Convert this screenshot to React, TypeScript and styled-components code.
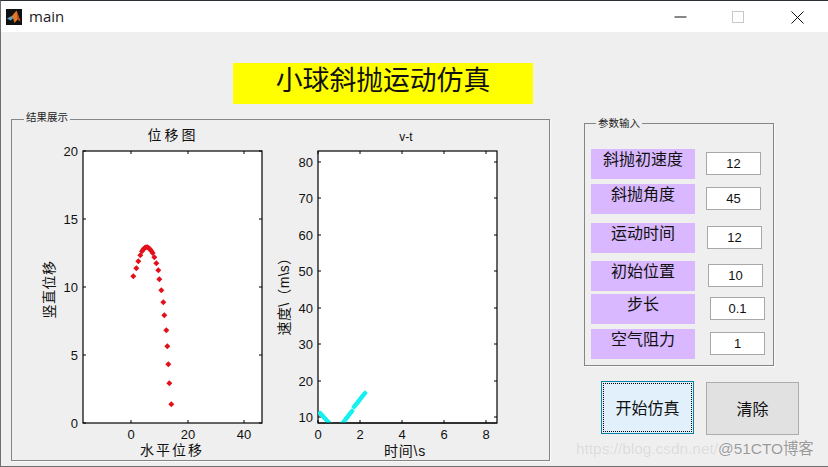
import React from "react";
import styled, { createGlobalStyle } from "styled-components";

const Global = createGlobalStyle`
  html, body { margin: 0; padding: 0; background: #efefef; }
  * { box-sizing: border-box; }
`;

const CJK = `"Noto Sans CJK SC", sans-serif`;
const LATIN = `"Liberation Sans", "Noto Sans CJK SC", sans-serif`;

const Shell = styled.div`
  position: relative;
  width: 828px;
  height: 467px;
  overflow: hidden;
  background: #efefef;
  border-top: 1px solid #2b2f36;
  border-left: 1px solid #6f6f6f;
  border-bottom: 1px solid #6f6f6f;
  font-family: ${CJK};
  color: #000;
`;

const TitleBar = styled.header`
  height: 31px;
  background: #fff;
  display: flex;
  align-items: center;
  padding-left: 5px;
`;

const AppIcon = styled.svg`
  width: 16px;
  height: 16px;
  display: block;
`;

const WindowName = styled.span`
  margin-left: 7px;
  font: 400 15px "Open Sans", sans-serif;
  color: #1a1a1a;
  margin-top: -1px;
`;

const WindowControls = styled.div`
  margin-left: auto;
  display: flex;
  height: 100%;
`;

const ControlGlyph = styled.svg<{ $gap: number }>`
  width: 13px;
  height: 13px;
  display: block;
  margin-right: ${(p) => p.$gap}px;
  align-self: center;
  margin-top: 1px;
`;

const Banner = styled.h1`
  margin: 31px 0 0 232px;
  width: 300px;
  height: 41px;
  background: #ffff00;
  font-family: ${CJK};
  font-weight: 400;
  font-size: 26.8px;
  line-height: 32px;
  text-align: center;
  color: #111;
`;

const Content = styled.main`
  display: flex;
  align-items: flex-start;
  margin-top: 15px;
  margin-left: 10px;
`;

const Panel = styled.section`
  border: 1px solid #858585;
  box-shadow: 1px 1px 0 #fafafa;
`;

const ResultsPanel = styled(Panel)`
  width: 539px;
  height: 342px;
`;

const PanelLegend = styled.div<{ $left: number; $top: number }>`
  width: fit-content;
  height: 12px;
  margin-left: ${(p) => p.$left}px;
  margin-top: ${(p) => p.$top}px;
  padding: 0 2px;
  background: #efefef;
  font-size: 10.5px;
  line-height: 12px;
  color: #222;
`;

const Charts = styled.div`
  display: flex;
  margin-top: 2px;
  padding-left: 28px;
`;

const ChartSvg = styled.svg`
  display: block;
  flex: none;
`;

const TickText = styled.text`
  font-family: ${LATIN};
  font-size: 13px;
  fill: #111;
`;

const AxisText = styled.text<{ $size: number; $spacing: number }>`
  font-family: ${LATIN};
  font-size: ${(p) => p.$size}px;
  letter-spacing: ${(p) => p.$spacing}px;
  fill: #111;
`;

const SidePanel = styled.aside`
  margin-left: 34px;
  margin-top: 4px;
`;

const ParamPanel = styled(Panel)`
  width: 190px;
  height: 243px;
`;

const ParamList = styled.div`
  padding-left: 6px;
`;

const ParamRow = styled.div<{ $gap: number }>`
  display: flex;
  align-items: flex-start;
  margin-top: ${(p) => p.$gap}px;
`;

const ParamLabel = styled.div`
  width: 104px;
  height: 30px;
  background: #d9b8ff;
  text-align: center;
  font-size: 16px;
  line-height: 19px;
  color: #111;
`;

const ParamValue = styled.div<{ $gap: number }>`
  width: 55px;
  height: 23px;
  margin-top: 3px;
  margin-left: ${(p) => p.$gap}px;
  background: #fff;
  border: 1px solid #a8a8a8;
  text-align: center;
  font-family: ${LATIN};
  font-size: 13px;
  line-height: 21px;
  color: #111;
`;

const ButtonRow = styled.div`
  display: flex;
  align-items: flex-start;
  margin-top: 15px;
  margin-left: 17px;
  gap: 12px;
`;

const ActionButton = styled.button<{ $primary?: boolean }>`
  width: 93px;
  height: 53px;
  margin-top: ${(p) => (p.$primary ? 0 : 1)}px;
  padding: 0 0 2px;
  background: ${(p) => (p.$primary ? "#e1f0fb" : "#e1e1e1")};
  border: 1px solid ${(p) => (p.$primary ? "#0a7fa8" : "#adadad")};
  outline: ${(p) => (p.$primary ? "1px dotted #000" : "none")};
  outline-offset: -3px;
  font-family: ${CJK};
  font-size: 16px;
  color: #111;
`;

const Watermark = styled.div`
  position: absolute;
  left: 575px;
  top: 437px;
  font: 400 15.4px/22px "Liberation Sans", "Noto Sans CJK SC", sans-serif;
  white-space: nowrap;
  pointer-events: none;
`;

const WatermarkLink = styled.span`
  color: rgba(190, 190, 190, 0.55);
  text-shadow: 0 0 1px #fff;
`;

const WatermarkBrand = styled.span`
  color: rgba(120, 120, 120, 0.75);
  text-shadow: 0 0 1px #fff;
`;

const redPoints: [number, number][] = [
  [340, 139], [349, 115], [355, 94], [361, 76], [366, 64], [370, 58], [374, 54], [378, 52], [382, 52],
  [386, 54], [390, 58], [394, 63], [398, 69], [403, 82], [409, 100], [415, 121], [418, 148], [424, 181],
  [430, 217], [433, 256], [439, 301], [442, 349], [445, 403], [448, 460], [454, 523],
].map(([x, y]) => [20 + x / 3, 230 + y / 3] as [number, number]);

function segment(x0: number, y0: number, x1: number, y1: number, n: number): [number, number][] {
  return Array.from({ length: n + 1 }, (_, i) => [x0 + ((x1 - x0) * i) / n, y0 + ((y1 - y0) * i) / n]);
}

const cyanPoints = [
  ...segment(320, 413, 330, 424, 10),
  ...segment(342, 424, 352, 411, 11),
  ...segment(354, 407, 365, 393, 11),
];

function diamond(x: number, y: number, r: number) {
  return `M${x} ${y - r}L${x + r} ${y}L${x} ${y + r}L${x - r} ${y}Z`;
}

type Tick = { at: number; label: string };

const leftX: Tick[] = [{ at: 131, label: "0" }, { at: 188, label: "20" }, { at: 244, label: "40" }];
const leftY: Tick[] = [
  { at: 423, label: "0" }, { at: 355, label: "5" }, { at: 287, label: "10" },
  { at: 219, label: "15" }, { at: 151, label: "20" },
];
const rightX: Tick[] = [
  { at: 318, label: "0" }, { at: 360, label: "2" }, { at: 402, label: "4" },
  { at: 444, label: "6" }, { at: 486, label: "8" },
];
const rightY: Tick[] = [
  { at: 417, label: "10" }, { at: 381, label: "20" }, { at: 344, label: "30" }, { at: 308, label: "40" },
  { at: 271, label: "50" }, { at: 235, label: "60" }, { at: 198, label: "70" }, { at: 162, label: "80" },
];

function Axes({ x, w, xTicks, yTicks }: { x: number; w: number; xTicks: Tick[]; yTicks: Tick[] }) {
  const top = 151;
  const bottom = 423;
  return (
    <>
      <rect x={x} y={top} width={w} height={bottom - top} fill="#fff" stroke="#000" strokeWidth="1.2" />
      {xTicks.map((t) => (
        <g key={t.label}>
          <path d={`M${t.at} ${top}v3M${t.at} ${bottom}v-3`} stroke="#000" strokeWidth="1" />
          <TickText x={t.at} y={439} textAnchor="middle">{t.label}</TickText>
        </g>
      ))}
      {yTicks.map((t) => (
        <g key={t.label}>
          <path d={`M${x} ${t.at}h3M${x + w} ${t.at}h-3`} stroke="#000" strokeWidth="1" />
          <TickText x={x - 5} y={t.at + 4.5} textAnchor="end">{t.label}</TickText>
        </g>
      ))}
    </>
  );
}

const params = [
  { label: "斜抛初速度", value: "12", rowGap: 20, valueGap: 11 },
  { label: "斜抛角度", value: "45", rowGap: 5, valueGap: 11 },
  { label: "运动时间", value: "12", rowGap: 9, valueGap: 12 },
  { label: "初始位置", value: "10", rowGap: 8, valueGap: 13 },
  { label: "步长", value: "0.1", rowGap: 3, valueGap: 15 },
  { label: "空气阻力", value: "1", rowGap: 5, valueGap: 15 },
];

export default function App() {
  return (
    <Shell>
      <Global />
      <TitleBar>
        <AppIcon viewBox="0 0 16 16">
          <rect width="16" height="16" fill="#111" />
          <path d="M1 9.5 5.5 7 7.5 9 4.5 11.5z" fill="#5f9fc0" />
          <path d="M5.5 7.5 10.5 1.5 14.5 12.5 11.5 10.5 8.5 14 7 9z" fill="#e07a28" />
          <path d="M10.5 1.5 14.5 12.5 11.5 10.5z" fill="#b8451c" />
        </AppIcon>
        <WindowName>main</WindowName>
        <WindowControls>
          <ControlGlyph $gap={45} viewBox="0 0 13 13">
            <path d="M0.5 6h12" stroke="#111" strokeWidth="1" />
          </ControlGlyph>
          <ControlGlyph $gap={46} viewBox="0 0 13 13">
            <rect x="0.5" y="0.5" width="11" height="11" fill="none" stroke="#c8c8c8" strokeWidth="1" />
          </ControlGlyph>
          <ControlGlyph $gap={24} viewBox="0 0 13 13">
            <path d="M0.5 0.5 12.5 12.5M12.5 0.5 0.5 12.5" stroke="#111" strokeWidth="1" />
          </ControlGlyph>
        </WindowControls>
      </TitleBar>

      <Banner>小球斜抛运动仿真</Banner>

      <Content>
        <ResultsPanel>
          <PanelLegend $left={12} $top={-9}>结果展示</PanelLegend>
          <Charts>
            <ChartSvg width={230} height={334} viewBox="40 125 230 334">
              <AxisText $size={14} $spacing={3} x={173} y={140} textAnchor="middle">位移图</AxisText>
              <Axes x={83} w={179} xTicks={leftX} yTicks={leftY} />
              {redPoints.map(([x, y], i) => (
                <path key={i} d={diamond(x, y, 3)} fill="#e3101c" />
              ))}
              <AxisText $size={14} $spacing={2} x={172} y={455} textAnchor="middle">水平位移</AxisText>
              <AxisText $size={14} $spacing={0.5} transform="translate(54 289.5) rotate(-90)" textAnchor="middle">竖直位移</AxisText>
            </ChartSvg>
            <ChartSvg width={240} height={334} viewBox="270 125 240 334">
              <defs>
                <clipPath id="vtClip">
                  <rect x={318} y={151} width={179} height={272} />
                </clipPath>
              </defs>
              <AxisText $size={12} $spacing={0} x={406} y={141} textAnchor="middle">v-t</AxisText>
              <Axes x={318} w={179} xTicks={rightX} yTicks={rightY} />
              <g clipPath="url(#vtClip)">
                {cyanPoints.map(([x, y], i) => (
                  <path key={i} d={diamond(x, y, 2.8)} fill="#16f0f0" />
                ))}
              </g>
              <path d="M318 423H497" stroke="#000" strokeWidth="1.2" />
              <AxisText $size={14} $spacing={0.8} x={405} y={456} textAnchor="middle">时间\s</AxisText>
              <AxisText $size={14} $spacing={0.3} transform="translate(289 293) rotate(-90)" textAnchor="middle">速度\（m\s）</AxisText>
            </ChartSvg>
          </Charts>
        </ResultsPanel>

        <SidePanel>
          <ParamPanel>
            <PanelLegend $left={11} $top={-7}>参数输入</PanelLegend>
            <ParamList>
              {params.map((p) => (
                <ParamRow key={p.label} $gap={p.rowGap}>
                  <ParamLabel>{p.label}</ParamLabel>
                  <ParamValue $gap={p.valueGap}>{p.value}</ParamValue>
                </ParamRow>
              ))}
            </ParamList>
          </ParamPanel>
          <ButtonRow>
            <ActionButton $primary>开始仿真</ActionButton>
            <ActionButton>清除</ActionButton>
          </ButtonRow>
        </SidePanel>
      </Content>

      <Watermark>
        <WatermarkLink>https://blog.csdn.net/</WatermarkLink>
        <WatermarkBrand>@51CTO博客</WatermarkBrand>
      </Watermark>
    </Shell>
  );
}
